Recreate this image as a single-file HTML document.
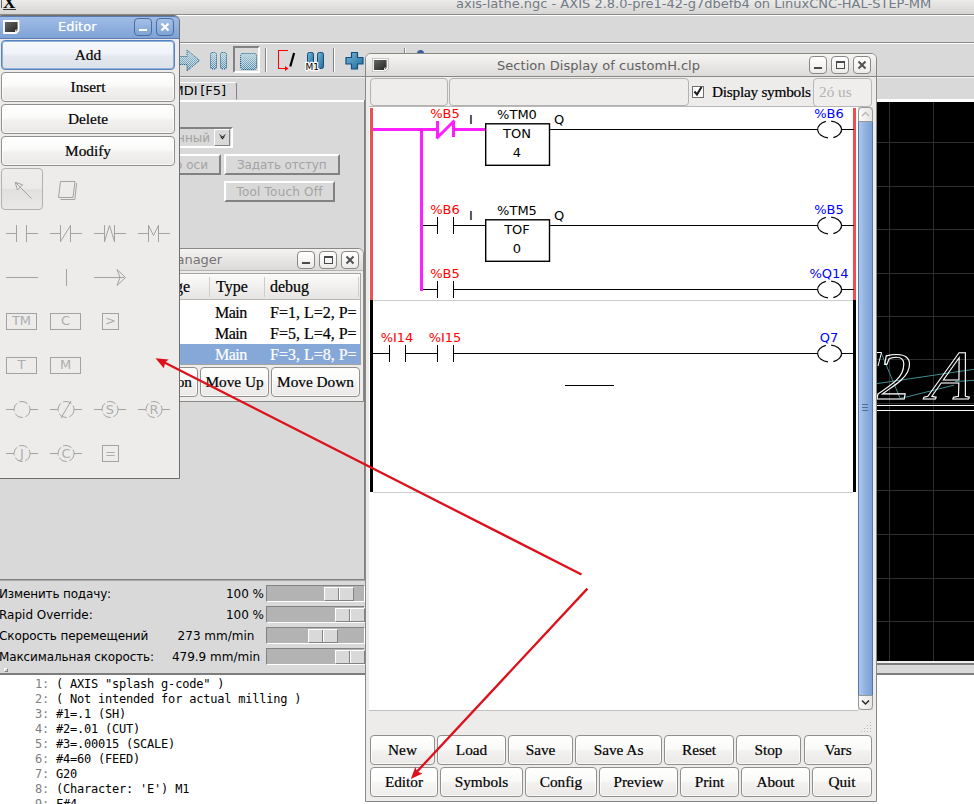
<!DOCTYPE html>
<html><head><meta charset="utf-8"><title>AXIS</title>
<style>
html,body{margin:0;padding:0}
body{width:974px;height:804px;overflow:hidden;position:relative;background:#d9d9d9;font-family:"DejaVu Sans","Liberation Sans",sans-serif;font-size:12px;color:#000}
.a{position:absolute;box-sizing:border-box}
.t{position:absolute;white-space:pre;line-height:1}
.sf{font-family:"Liberation Serif",serif}
.gb{position:absolute;box-sizing:border-box;border:1px solid #918f8c;border-radius:4px;background:linear-gradient(#ffffff 0%,#fafaf9 45%,#f2f1f0 55%,#eae9e8 100%);font-family:"Liberation Serif",serif;font-size:15.3px;-webkit-text-stroke:0.2px #000;text-align:center;color:#000;box-shadow:inset 0 0 0 1px rgba(255,255,255,.7)}
.gb span{position:absolute;left:0;right:0;text-align:center;line-height:1}
.tkb{position:absolute;box-sizing:border-box;border:2px solid;border-color:#fff #828282 #828282 #fff;background:#d9d9d9;color:#a3a3a3;font-size:12px;text-align:center}
.wb{position:absolute;box-sizing:border-box;border:1px solid #8a8885;border-radius:4px;background:linear-gradient(#ffffff,#ecebea)}
.sl{left:266px;width:99px;height:17px;border:1px solid;border-color:#828282 #fff #fff #828282;background:#b3b3b3}
.kn{width:30px;height:14px;border:1px solid;border-color:#fff #828282 #828282 #fff;background:#d9d9d9}
.kn:after{content:"";position:absolute;left:13px;top:0;width:1px;height:12px;background:#828282;box-shadow:1px 0 0 #fff}
#gc span{color:#808080}
#mgr .sf{-webkit-text-stroke:0.2px}
</style></head><body>
<!-- MAIN -->
<div id="main">
<!-- title bar -->
<div class="a" style="left:0;top:0;width:974px;height:14px;background:linear-gradient(#ebebea,#d6d5d4)"></div>
<div class="t" style="left:456px;top:-3px;font-size:13px;color:#727a85">axis-lathe.ngc - AXIS 2.8.0-pre1-42-g7dbefb4 on LinuxCNC-HAL-STEP-MM</div>
<div class="t sf" style="left:3px;top:-6px;font-size:17px;font-weight:bold;color:#000">X</div>
<div class="a" style="left:3px;top:9px;width:13px;height:1px;background:#333"></div>
<div class="a" style="left:1px;top:0;width:1px;height:8px;background:#666"></div>
<div class="a" style="left:0;top:14px;width:974px;height:1px;background:#8a8a8a"></div>
<div class="a" style="left:0;top:15px;width:974px;height:1px;background:#fff"></div>
<!-- menu sep -->
<div class="a" style="left:0;top:42px;width:974px;height:1px;background:#8a8a8a"></div>
<div class="a" style="left:0;top:43px;width:974px;height:1px;background:#fff"></div>
<!-- toolbar sep -->
<div class="a" style="left:0;top:76px;width:974px;height:1px;background:#8a8a8a"></div>
<div class="a" style="left:0;top:77px;width:974px;height:1px;background:#f4f4f4"></div>
<!-- toolbar icons -->
<svg class="a" style="left:176px;top:44px" width="200" height="32" viewBox="176 44 200 32">
<defs>
<pattern id="chk" width="2" height="2" patternUnits="userSpaceOnUse"><rect x="1" y="0" width="1" height="1" fill="#d9d9d9"/><rect x="0" y="1" width="1" height="1" fill="#d9d9d9"/></pattern>
<linearGradient id="sg" x1="0" y1="0" x2="0" y2="1"><stop offset="0" stop-color="#a6d6e6"/><stop offset="1" stop-color="#3c86b0"/></linearGradient>
<linearGradient id="bg2" x1="0" y1="0" x2="1" y2="1"><stop offset="0" stop-color="#74b6d6"/><stop offset="1" stop-color="#1f6a9c"/></linearGradient>
</defs>
<g fill="url(#sg)"><path d="M176.500 56.500h10.500v-6.500l12.500 10.500-12.500 10.500v-6.500h-10.500z"/><rect x="210.500" y="52.500" width="6" height="16.500" rx="1.800"/><rect x="220.500" y="52.500" width="6" height="16.500" rx="1.800"/></g>
<rect x="233" y="46" width="27" height="27" fill="#fff"/><path d="M233 46h27l-2 2v23h-23l-2 2z" fill="#828282"/><rect x="235" y="48" width="23" height="23" fill="#d9d9d9"/>
<g fill="url(#sg)"><rect x="240.500" y="53.500" width="16" height="16" rx="2"/></g>
<g fill="url(#chk)"><path d="M176.500 56.500h10.500v-6.500l12.500 10.500-12.500 10.500v-6.500h-10.500z"/><rect x="210.500" y="52.500" width="6" height="16.500" rx="1.800"/><rect x="220.500" y="52.500" width="6" height="16.500" rx="1.800"/><rect x="240.500" y="53.500" width="16" height="16" rx="2"/></g>
<g fill="none" stroke="#1c5a85" stroke-width="1" stroke-dasharray="1 1"><path d="M176.500 56.500h10.500v-6.500l12.500 10.500-12.500 10.500v-6.500h-10.500z"/><rect x="210.500" y="52.500" width="6" height="16.500" rx="1.800"/><rect x="220.500" y="52.500" width="6" height="16.500" rx="1.800"/><rect x="240.500" y="53.500" width="16" height="16" rx="2"/></g>
<rect x="265" y="48" width="1" height="24" fill="#828282"/><rect x="266" y="48" width="1" height="24" fill="#fff"/>
<path d="M288 50.500h-9.500v18h8" fill="none" stroke="#f00" stroke-width="1" shape-rendering="crispEdges"/>
<path d="M285 66l3.500 2.500-3.500 2.500z" fill="#f00"/>
<path d="M290.300 66.500l3.800-13.500" stroke="#000" stroke-width="2.200" fill="none"/>
<rect x="307.500" y="52.500" width="6" height="16" rx="1.800" fill="url(#bg2)" stroke="#17507a" stroke-width="1"/>
<rect x="317.500" y="52.500" width="6" height="16" rx="1.800" fill="url(#bg2)" stroke="#17507a" stroke-width="1"/>
<text x="305.500" y="70" font-family="DejaVu Sans,sans-serif" font-size="9" fill="#000" stroke="#fff" stroke-width="2.500" stroke-linejoin="round">M1</text>
<text x="305.500" y="70" font-family="DejaVu Sans,sans-serif" font-size="9" fill="#000">M1</text>
<rect x="333" y="48" width="1" height="24" fill="#828282"/><rect x="334" y="48" width="1" height="24" fill="#fff"/>
<path d="M351.500 52.500h6v5h5.500v6.500h-5.500v5h-6v-5h-5.500v-6.500h5.500z" fill="url(#bg2)" stroke="#0f4f80" stroke-width="1.200" stroke-linejoin="round"/>
</svg>
<!-- bits visible above Section window -->
<div class="a" style="left:404px;top:48px;width:1px;height:6px;background:#828282"></div>
<div class="a" style="left:405px;top:48px;width:1px;height:6px;background:#fff"></div>
<div class="a" style="left:417px;top:50px;width:7px;height:4px;background:#3b5ea0;border-radius:4px 4px 0 0"></div>
<!-- tab MDI -->
<div class="a" style="left:150px;top:82px;width:87px;height:18px;border:1px solid;border-color:#fff #828282 transparent #fff;border-radius:3px 3px 0 0;background:#d9d9d9"></div>
<div class="t" style="left:172.500px;top:84px;font-size:13px;word-spacing:-1.500px">MDI [F5]</div>
<div class="a" style="left:0;top:100px;width:364px;height:2px;background:#fff"></div>
<div class="a" style="left:364px;top:100px;width:1px;height:480px;background:#828282"></div>
<!-- combobox -->
<div class="a" style="left:150px;top:127px;width:83px;height:21px;border:2px solid;border-color:#828282 #fff #fff #828282;background:#d9d9d9"></div>
<div class="t" style="left:131px;width:79px;text-align:right;top:132px;font-size:12px;color:#a3a3a3">Постоянный</div>
<div class="a" style="left:214px;top:129px;width:16px;height:17px;border:1px solid;border-color:#fff #828282 #828282 #fff;background:#d9d9d9"></div>
<svg class="a" style="left:219px;top:134px" width="7" height="6" viewBox="0 0 7 6"><path d="M0 0.500h1l2.500 2 2.500-2h1l-3.500 3zM1 2.500h1l1.500 1.500 1.500-1.500h1l-2.500 3z" fill="#111"/></svg>
<!-- tk buttons -->
<div class="tkb" style="left:120px;top:154px;width:101px;height:21px"><span class="t" style="right:11px;top:3px">по оси</span></div>
<div class="tkb" style="left:224px;top:154px;width:116px;height:21px"><span class="t" style="left:11px;top:3px;letter-spacing:-0.15px">Задать отступ</span></div>
<div class="tkb" style="left:224px;top:181px;width:111px;height:21px"><span class="t" style="left:10.500px;top:3px;letter-spacing:0.2px">Tool Touch Off</span></div>
<!-- sliders panel -->
<div class="a" style="left:0;top:579px;width:365px;height:1px;background:#828282"></div>
<div class="a" style="left:0;top:580px;width:365px;height:1px;background:#a8a8a8"></div>
<div class="t" style="left:-1px;top:588px;font-size:12px;letter-spacing:-0.15px">Изменить подачу:</div>
<div class="t" style="left:-1px;top:609px;font-size:12px">Rapid Override:</div>
<div class="t" style="left:-1px;top:630px;font-size:12px;letter-spacing:-0.1px">Скорость перемещений</div>
<div class="t" style="left:-1px;top:651px;font-size:12px;letter-spacing:-0.12px">Максимальная скорость:</div>
<div class="t" style="left:164px;width:100px;text-align:right;top:588px;font-size:12px">100 %</div>
<div class="t" style="left:164px;width:100px;text-align:right;top:609px;font-size:12px">100 %</div>
<div class="t" style="left:166px;width:100px;text-align:center;top:630px;font-size:12px">273 mm/min</div>
<div class="t" style="left:166px;width:100px;text-align:center;top:651px;font-size:12px">479.9 mm/min</div>
<!-- slider troughs -->
<div class="a sl" style="top:585px"></div><div class="a kn" style="left:324px;top:587px"></div>
<div class="a sl" style="top:606px"></div><div class="a kn" style="left:335px;top:608px"></div>
<div class="a sl" style="top:627px"></div><div class="a kn" style="left:308px;top:629px"></div>
<div class="a sl" style="top:648px"></div><div class="a kn" style="left:335px;top:650px"></div>
<div class="a" style="left:4px;top:668px;width:4px;height:4px;border:1px solid;border-color:#fff #828282 #828282 #fff"></div>
<!-- gcode area -->
<div class="a" style="left:0;top:673px;width:974px;height:2px;background:#7d7d7d"></div>
<div class="a" style="left:0;top:675px;width:974px;height:129px;background:#fff"></div>
<pre class="t" id="gc" style="left:7px;top:677px;margin:0;font-family:'DejaVu Sans Mono','Liberation Mono',monospace;font-size:12px;line-height:15px;letter-spacing:-0.22px"><span>    1: </span>( AXIS "splash g-code" )
<span>    2: </span>( Not intended for actual milling )
<span>    3: </span>#1=.1 (SH)
<span>    4: </span>#2=.01 (CUT)
<span>    5: </span>#3=.00015 (SCALE)
<span>    6: </span>#4=60 (FEED)
<span>    7: </span>G20
<span>    8: </span>(Character: 'E') M1
<span>    9: </span>F#4</pre>
<!-- preview -->
<div class="a" style="left:866px;top:99px;width:108px;height:3px;background:#fff"></div>
<div class="a" style="left:866px;top:102px;width:108px;height:559px;background:#000"></div>
<div class="a" style="left:866px;top:661px;width:108px;height:2px;background:#f0f0f0"></div>
<div class="a" style="left:866px;top:663px;width:108px;height:2px;background:#7d7d7d"></div>
<svg class="a" style="left:877px;top:102px" width="97" height="559" viewBox="877 102 97 559">
<g stroke="#2d2d2d" stroke-width="1" shape-rendering="crispEdges">
<path d="M889.500 102v559M933.500 102v559"/>
<path d="M877 142.500h97M877 186.500h97M877 229.500h97M877 273.500h97M877 316.500h97M877 359.500h97M877 403.500h97M877 447.500h97M877 490.500h97M877 534.500h97M877 578.500h97M877 621.500h97"/>
</g>
<g fill="none" stroke="#3f8e90" stroke-width="1"><path d="M877 383.600L974 369.300M881.200 353L900.200 398.500L954 385.200M955 381.600L974 380.300"/></g>
<g font-family="Liberation Serif,serif" font-style="italic" fill="none" stroke="#fff" stroke-width="1.100">
<text x="877" y="398.500" font-size="68">2</text>
<text transform="translate(927,398.500) skewX(-10.900) scale(.977,1)" x="0" y="0" font-size="70">A</text>
</g>
<path d="M877 352.500h4.500l-3.500 13.500" fill="none" stroke="#fff"/>
<path d="M877 405.500h97M877 410.500h97" stroke="#fff" stroke-width="1" shape-rendering="crispEdges"/>
</svg>
</div>

<!-- MANAGER -->
<div id="mgr">
<div class="a" style="left:100px;top:248px;width:264px;height:154px;background:#edeceb;border:1px solid #8a8987;border-radius:6px 6px 0 0"></div>
<div class="a" style="left:101px;top:249px;width:262px;height:22px;background:linear-gradient(#f4f3f2,#dcdad8);border-radius:5px 5px 0 0;border-bottom:1px solid #b5b3b1"></div>
<div class="t" style="left:106px;top:253px;font-size:13px;color:#757472">Sections Manager</div>
<!-- window buttons -->
<div class="wb" style="left:297px;top:251px;width:18px;height:18px"></div>
<div class="a" style="left:302px;top:262px;width:8px;height:2px;background:#4a4a4a"></div>
<div class="wb" style="left:319px;top:251px;width:18px;height:18px"></div>
<div class="a" style="left:324px;top:256px;width:9px;height:8px;border:1px solid #4a4a4a;border-top-width:2px"></div>
<div class="wb" style="left:341px;top:251px;width:18px;height:18px"></div>
<svg class="a" style="left:345px;top:255px" width="10" height="10" viewBox="0 0 10 10"><path d="M1.500 1.500l7 7M8.500 1.500l-7 7" stroke="#505050" stroke-width="1.900" fill="none"/></svg>
<!-- tree -->
<div class="a" style="left:110px;top:273px;width:251px;height:92px;background:#fff;border:1px solid #a5a4a2"></div>
<div class="a" style="left:111px;top:274px;width:249px;height:26px;background:linear-gradient(#fbfbfa,#e6e5e4);border-bottom:1px solid #b9b8b6"></div>
<div class="a" style="left:209px;top:277px;width:1px;height:20px;background:#cfcecd"></div>
<div class="a" style="left:264px;top:277px;width:1px;height:20px;background:#cfcecd"></div>
<div class="a" style="left:358px;top:277px;width:1px;height:20px;background:#cfcecd"></div>
<div class="t sf" style="left:127px;top:279px;font-size:16px">Language</div>
<div class="t sf" style="left:216px;top:279px;font-size:16px">Type</div>
<div class="t sf" style="left:270px;top:279px;font-size:16px">debug</div>
<div class="a" style="left:111px;top:344px;width:249px;height:20px;background:#86a8d9"></div>
<div class="t sf" style="left:215px;top:305px;font-size:16px;letter-spacing:-0.5px">Main</div>
<div class="t sf" style="left:215px;top:326px;font-size:16px;letter-spacing:-0.5px">Main</div>
<div class="t sf" style="left:215px;top:347px;font-size:16px;color:#fff;letter-spacing:-0.5px">Main</div>
<div class="t sf" style="left:270px;top:305px;font-size:16px;width:90px;overflow:hidden">F=1, L=2, P=</div>
<div class="t sf" style="left:270px;top:326px;font-size:16px;width:90px;overflow:hidden">F=5, L=4, P=</div>
<div class="t sf" style="left:270px;top:347px;font-size:16px;color:#fff;width:90px;overflow:hidden">F=3, L=8, P=</div>
<div class="gb" style="left:110px;top:367px;width:88px;height:30px"><span style="top:6px;left:auto;right:5px">Add section</span></div>
<div class="gb" style="left:200px;top:367px;width:69px;height:30px"><span style="top:6px">Move Up</span></div>
<div class="gb" style="left:271px;top:367px;width:89px;height:30px"><span style="top:6px">Move Down</span></div>
</div>

<!-- SECTION -->
<div id="sec">
<div class="a" style="left:365px;top:53px;width:512px;height:749px;background:#edeceb;border:1px solid #8a8885;border-radius:6px 6px 0 0"></div>
<div class="a" style="left:366px;top:54px;width:510px;height:23px;background:linear-gradient(#f6f5f4,#dddbd9);border-radius:5px 5px 0 0;border-bottom:1px solid #8a8885"></div>
<svg class="a" style="left:372px;top:58px" width="17" height="14" viewBox="0 0 17 14"><defs><linearGradient id="ig" x1="0" y1="0" x2="1" y2="1"><stop offset="0" stop-color="#6a6d6a"/><stop offset="1" stop-color="#1e201e"/></linearGradient></defs><path d="M1 1h14.500v9.500l-2.500 2.500h-12z" fill="url(#ig)" stroke="#fff" stroke-width="1.800"/><path d="M0.300 0.300h16v10.500l-3 3h-13z" fill="none" stroke="#8b8b89" stroke-width=".6"/><path d="M12.500 12.500v-2.500h2.500" fill="none" stroke="#cfcfcf" stroke-width="1"/></svg>
<div class="t" style="left:497px;top:58.500px;font-size:13px;letter-spacing:0.045px;color:#62615f">Section Display of customH.clp</div>
<div class="wb" style="left:809px;top:56px;width:18px;height:18px"></div>
<div class="a" style="left:814px;top:67px;width:8px;height:2px;background:#4a4a4a"></div>
<div class="wb" style="left:831px;top:56px;width:18px;height:18px"></div>
<div class="a" style="left:836px;top:61px;width:9px;height:8px;border:1px solid #4a4a4a;border-top-width:2px"></div>
<div class="wb" style="left:853px;top:56px;width:18px;height:18px"></div>
<svg class="a" style="left:857px;top:60px" width="10" height="10" viewBox="0 0 10 10"><path d="M1.500 1.500l7 7M8.500 1.500l-7 7" stroke="#505050" stroke-width="1.900" fill="none"/></svg>
<!-- top row -->
<div class="a" style="left:370px;top:78px;width:78px;height:28px;border:1px solid #b4b2b0;border-radius:4px;background:#eeedec"></div>
<div class="a" style="left:449px;top:78px;width:240px;height:28px;border:1px solid #b4b2b0;border-radius:4px;background:#eeedec"></div>
<div class="a" style="left:692px;top:86px;width:12px;height:12px;border:1px solid #6f6e6c;background:#fff"></div>
<svg class="a" style="left:691px;top:84px" width="14" height="14" viewBox="0 0 14 14"><path d="M3.500 7.500l2.500 3l4.500-7.500" fill="none" stroke="#1a1a1a" stroke-width="2"/></svg>
<div class="t sf" style="left:712px;top:84px;font-size:15.3px;letter-spacing:-0.25px;-webkit-text-stroke:0.2px">Display symbols</div>
<div class="a" style="left:813px;top:78px;width:59px;height:29px;border:1px solid #b9b7b5;border-radius:4px;background:#efeeed"></div>
<div class="t sf" style="left:819px;top:84px;font-size:15.3px;color:#b3b1af">2ó us</div>
<!-- drawing area -->
<div class="a" style="left:369px;top:106px;width:489px;height:605px;background:#fff;border-top:1px solid #bab8b6;border-bottom:1px solid #c4c2c0"></div>
<svg class="a" style="left:369px;top:107px" width="489" height="387" viewBox="369 107 489 387" font-family="DejaVu Sans,sans-serif" font-size="13" text-anchor="middle">
<g shape-rendering="crispEdges">
<rect x="373" y="300" width="480" height="1" fill="#cdcdcd"/>
<rect x="373" y="492" width="480" height="1" fill="#cdcdcd"/>
<rect x="370" y="108" width="3" height="192" fill="#ee5052"/>
<rect x="853" y="108" width="3" height="192" fill="#ee5052"/>
<rect x="370" y="300" width="3" height="192" fill="#000"/>
<rect x="853" y="300" width="3" height="192" fill="#000"/>
<!-- magenta -->
<rect x="373" y="128" width="64" height="3" fill="#ff1eff"/>
<rect x="453" y="128" width="33" height="3" fill="#ff1eff"/>
<rect x="420" y="128" width="3" height="163" fill="#ff1eff"/>
<rect x="436" y="121" width="3" height="16" fill="#ff1eff"/>
<rect x="452" y="121" width="3" height="16" fill="#ff1eff"/>
<!-- black lines -->
<g fill="#000">
<rect x="549" y="129" width="269" height="1"/><rect x="841" y="129" width="13" height="1"/>
<rect x="423" y="225" width="14" height="1"/><rect x="437" y="217" width="1" height="17"/><rect x="453" y="217" width="1" height="17"/><rect x="453" y="225" width="32" height="1"/>
<rect x="549" y="225" width="269" height="1"/><rect x="841" y="225" width="13" height="1"/>
<rect x="423" y="289" width="14" height="1"/><rect x="437" y="281" width="1" height="17"/><rect x="453" y="281" width="1" height="17"/><rect x="453" y="289" width="365" height="1"/><rect x="841" y="289" width="13" height="1"/>
<rect x="373" y="353" width="16" height="1"/><rect x="389" y="345" width="1" height="17"/><rect x="405" y="345" width="1" height="17"/><rect x="405" y="353" width="32" height="1"/><rect x="437" y="345" width="1" height="17"/><rect x="453" y="345" width="1" height="17"/><rect x="453" y="353" width="365" height="1"/><rect x="841" y="353" width="13" height="1"/>
<rect x="565" y="385" width="49" height="1"/>
</g>
</g>
<path d="M437.500 137.500L453.500 121.500" stroke="#ff1eff" stroke-width="3" stroke-linecap="square" fill="none"/>
<g fill="#fff" stroke="#000" stroke-width="1.400">
<rect x="485.700" y="123.800" width="63.800" height="41.500"/><rect x="485.700" y="219.800" width="63.800" height="41.500"/>
</g>
<g fill="none" stroke="#000" stroke-width="1.200">
<path d="M825.900 121.400A12 8.500 0 0 0 828 137.900M831.200 121.100A12 8.500 0 0 1 833.300 137.600"/><path transform="translate(0,96)" d="M825.900 121.400A12 8.500 0 0 0 828 137.900M831.200 121.100A12 8.500 0 0 1 833.300 137.600"/><path transform="translate(0,160)" d="M825.900 121.400A12 8.500 0 0 0 828 137.900M831.200 121.100A12 8.500 0 0 1 833.300 137.600"/><path transform="translate(0,224)" d="M825.900 121.400A12 8.500 0 0 0 828 137.900M831.200 121.100A12 8.500 0 0 1 833.300 137.600"/>
</g>
<g fill="#f00"><text x="445" y="117.500">%B5</text><text x="445" y="213.500">%B6</text><text x="445" y="277.500">%B5</text><text x="397" y="341.500">%I14</text><text x="445" y="341.500">%I15</text></g>
<g fill="#00f"><text x="829" y="117.500">%B6</text><text x="829" y="213.500">%B5</text><text x="829" y="277.500">%Q14</text><text x="829" y="341.500">Q7</text></g>
<g fill="#000"><text x="517" y="118.500">%TM0</text><text x="517" y="137.500">TON</text><text x="517" y="156.500">4</text><text x="471" y="123.500">I</text><text x="559" y="123.500">Q</text>
<text x="517" y="214.500">%TM5</text><text x="517" y="233.500">TOF</text><text x="517" y="252.500">0</text><text x="471" y="219.500">I</text><text x="559" y="219.500">Q</text></g>
</svg>
<!-- scrollbar -->
<div class="a" style="left:858px;top:107px;width:15px;height:603px;background:#d6d4d2"></div>
<div class="a" style="left:858px;top:121px;width:15px;height:575px;border:1px solid #5776a8;background:linear-gradient(90deg,#abc8ee,#90b1e0 50%,#7a9fd5)"></div>
<div class="a" style="left:858px;top:107px;width:15px;height:15px;border:1px solid #9a9896;border-radius:4px 4px 0 0;background:linear-gradient(90deg,#fbfbfa,#e6e5e4)"></div>
<div class="a" style="left:858px;top:695px;width:15px;height:15px;border:1px solid #9a9896;border-radius:0 0 4px 4px;background:linear-gradient(90deg,#fbfbfa,#e6e5e4)"></div>
<svg class="a" style="left:861px;top:111px" width="9" height="7" viewBox="0 0 9 7"><path d="M1 5l3.500-3.500l3.500 3.500" fill="none" stroke="#b8b6b4" stroke-width="1.300"/></svg>
<svg class="a" style="left:861px;top:699px" width="9" height="7" viewBox="0 0 9 7"><path d="M1 1.500l3.500 3.500l3.500-3.500" fill="none" stroke="#2a2a2a" stroke-width="1.500"/></svg>
<div class="a" style="left:862px;top:404px;width:6px;height:1px;background:#4f6e9c;box-shadow:0 3px 0 #4f6e9c,0 6px 0 #4f6e9c"></div>
<!-- grip -->
<svg class="a" style="left:861px;top:721px" width="12" height="12" viewBox="0 0 12 12" shape-rendering="crispEdges"><g fill="#b8b6b4"><rect x="9" y="1" width="1" height="1"/><rect x="6" y="4" width="1" height="1"/><rect x="9" y="4" width="1" height="1"/><rect x="3" y="7" width="1" height="1"/><rect x="6" y="7" width="1" height="1"/><rect x="9" y="7" width="1" height="1"/><rect x="0" y="10" width="1" height="1"/><rect x="3" y="10" width="1" height="1"/><rect x="6" y="10" width="1" height="1"/><rect x="9" y="10" width="1" height="1"/></g></svg>
<!-- buttons -->
<div class="gb" style="left:370px;top:735px;width:65px;height:30px"><span style="top:6px">New</span></div>
<div class="gb" style="left:437px;top:735px;width:69px;height:30px"><span style="top:6px">Load</span></div>
<div class="gb" style="left:508px;top:735px;width:65px;height:30px"><span style="top:6px">Save</span></div>
<div class="gb" style="left:575px;top:735px;width:87px;height:30px"><span style="top:6px">Save As</span></div>
<div class="gb" style="left:664px;top:735px;width:70px;height:30px"><span style="top:6px">Reset</span></div>
<div class="gb" style="left:736px;top:735px;width:65px;height:30px"><span style="top:6px">Stop</span></div>
<div class="gb" style="left:804px;top:735px;width:68px;height:30px"><span style="top:6px">Vars</span></div>
<div class="gb" style="left:370px;top:767px;width:68px;height:30px;background:linear-gradient(#ffffff 0%,#fdfdfd 45%,#f6f6f5 55%,#eeedec 100%)"><span style="top:6px">Editor</span></div>
<div class="gb" style="left:440px;top:767px;width:83px;height:30px"><span style="top:6px">Symbols</span></div>
<div class="gb" style="left:525px;top:767px;width:72px;height:30px"><span style="top:6px">Config</span></div>
<div class="gb" style="left:599px;top:767px;width:79px;height:30px"><span style="top:6px">Preview</span></div>
<div class="gb" style="left:680px;top:767px;width:59px;height:30px"><span style="top:6px">Print</span></div>
<div class="gb" style="left:741px;top:767px;width:69px;height:30px"><span style="top:6px">About</span></div>
<div class="gb" style="left:812px;top:767px;width:60px;height:30px"><span style="top:6px">Quit</span></div>
</div>

<!-- EDITOR -->
<div id="ed">
<div class="a" style="left:-4px;top:15px;width:184px;height:464px;background:#edeceb;border:1px solid #6f6e6c;border-radius:6px 6px 0 0"></div>
<div class="a" style="left:0;top:16px;width:179px;height:23px;background:linear-gradient(#9fbce6,#7fa3d6);border-radius:0 5px 0 0;border-bottom:1px solid #5b7cae;border-top:1px solid #5b7cae"></div>
<svg class="a" style="left:3px;top:20px" width="17" height="14" viewBox="0 0 17 14"><path d="M1 1h14.500v9.500l-2.500 2.500h-12z" fill="url(#ig)" stroke="#fff" stroke-width="1.800"/><path d="M12.500 12.500v-2.500h2.500" fill="none" stroke="#cfcfcf" stroke-width="1"/></svg>
<div class="t" style="left:58px;top:20px;font-size:13px;color:#fff;text-shadow:0 0 1px #d8e4f5">Editor</div>
<div class="a" style="left:134px;top:18px;width:18px;height:18px;border:1px solid #4d6d9f;border-radius:4px;background:linear-gradient(#a5c0e8,#7fa3d6)"></div>
<div class="a" style="left:139px;top:29px;width:8px;height:2px;background:#fff"></div>
<div class="a" style="left:156px;top:18px;width:18px;height:18px;border:1px solid #4d6d9f;border-radius:4px;background:linear-gradient(#a5c0e8,#7fa3d6)"></div>
<svg class="a" style="left:160px;top:22px" width="10" height="10" viewBox="0 0 10 10"><path d="M1.500 1.500l7 7M8.500 1.500l-7 7" stroke="#fff" stroke-width="2.200" fill="none"/></svg>
<!-- buttons -->
<div class="gb" style="left:1px;top:40px;width:174px;height:30px;border-color:#5a82bd;box-shadow:inset 0 0 0 1px #8fb0de;background:linear-gradient(#f7f9fc 0%,#eff2f7 45%,#e4e8ee 55%,#dde1e8 100%)"><span style="top:6px">Add</span></div>
<div class="gb" style="left:1px;top:72px;width:174px;height:30px"><span style="top:6px">Insert</span></div>
<div class="gb" style="left:1px;top:104px;width:174px;height:30px"><span style="top:6px">Delete</span></div>
<div class="gb" style="left:1px;top:136px;width:174px;height:30px"><span style="top:6px">Modify</span></div>
<!-- tool grid -->
<div class="a" style="left:1px;top:168px;width:42px;height:42px;border:1px solid #b3b1af;border-radius:4px;background:linear-gradient(#eeedec 0%,#ebeae9 50%,#e1e0df 50%,#e9e8e7 100%)"></div>
<svg class="a" style="left:0;top:166px" width="180" height="312" viewBox="0 166 180 312" fill="none" stroke="#a2a2a2" stroke-width="1" font-family="DejaVu Sans,sans-serif" font-size="13" text-anchor="middle">
<path d="M31.500 198.500L16 183M15.200 182.300l2.200 7.700l5.200-5.200z"/>
<path d="M60.500 181.500h14.500l-2 16h-14.500zM76.700 183l-1.900 16.500h-14.300"/>
<g shape-rendering="crispEdges">
<path d="M6 233.500h10M16.500 225v17M26.500 225v17M27 233.500h11"/>
<path d="M50 233.500h10M60.500 225v17M70.500 225v17M71 233.500h11"/>
<path d="M94 233.500h10M104.500 225v17M114.500 225v17M115 233.500h11"/>
<path d="M138 233.500h10M148.500 225v17M158.500 225v17M159 233.500h11"/>
<path d="M6 277.500h32M66.500 269v17M94 277.500h30"/>
<rect x="6.500" y="313.500" width="30" height="16"/><rect x="50.500" y="313.500" width="30" height="16"/><rect x="102.500" y="313.500" width="16" height="16"/>
<rect x="6.500" y="357.500" width="30" height="16"/><rect x="50.500" y="357.500" width="30" height="16"/>
<rect x="102.500" y="445.500" width="16" height="16"/>
<path d="M6 409.500h8M30 409.500h8M50 409.500h8M74 409.500h8M94 409.500h8M118 409.500h8M138 409.500h8M162 409.500h8"/>
<path d="M6 453.500h8M30 453.500h8M50 453.500h8M74 453.500h8"/>
</g>
<path d="M60.500 241.500l10-16M104.500 241.500l5-16l5 16M148.500 225.500l5 10l5-10"/>
<path d="M117 269.500l8.500 8l-8.500 8l3-8z"/>
<g stroke-dasharray="9 2.500"><circle cx="22" cy="409.500" r="8"/><circle cx="66" cy="409.500" r="8"/><circle cx="110" cy="409.500" r="8"/><circle cx="154" cy="409.500" r="8"/><circle cx="22" cy="453.500" r="8"/><circle cx="66" cy="453.500" r="8"/></g>
<path d="M61 418l10-17"/>
<g fill="#adadad" stroke="none"><text x="21.500" y="325">TM</text><text x="65.500" y="325">C</text><text x="110.500" y="325">&gt;</text><text x="21.500" y="369">T</text><text x="65.500" y="369">M</text>
<text x="110" y="413.500">S</text><text x="154" y="413.500">R</text><text x="22" y="457.500">J</text><text x="66" y="457.500">C</text><text x="110.500" y="457.500">=</text></g>
</svg>
</div>

<!-- ARROWS -->
<svg id="arr" class="a" style="left:0;top:0" width="974" height="804" viewBox="0 0 974 804"><g stroke="#dc111b" stroke-width="2.300" fill="none"><path d="M581.500 574.500L164.500 362.500M587.400 588.600L417 771.600"/></g><g fill="#dc111b"><path d="M155.500 358.200L168.700 359.400L165.300 362.300L163.800 368.200z"/><path d="M410.800 779L415.300 767L417.200 771.400L422.400 773.400z"/></g></svg>

</body></html>
